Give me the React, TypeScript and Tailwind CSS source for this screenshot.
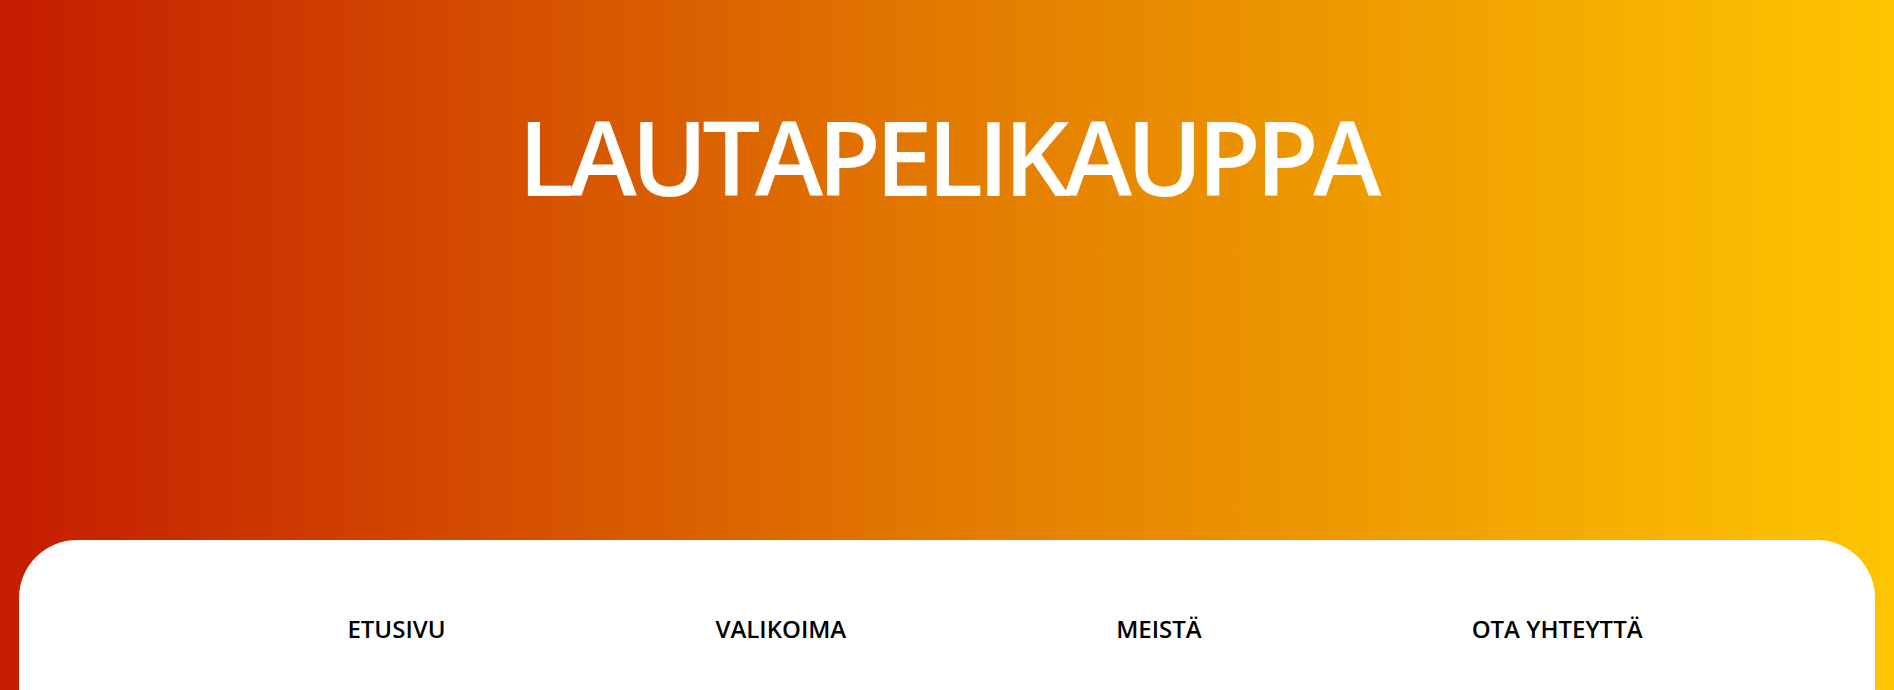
export default function App() {
  const items = ["ETUSIVU", "VALIKOIMA", "MEISTÄ", "OTA YHTEYTTÄ"];
  return (
    <div
      className="h-[690px] w-full overflow-hidden bg-[linear-gradient(to_right,#c41c00_0%,#e37a00_50%,#fec500_100%)]"
      style={{ fontFamily: '"Open Sans", "Liberation Sans", sans-serif' }}
    >
      <h1 className="pt-[105px] text-center text-[103px] font-semibold leading-none tracking-[-5.5px] text-white">
        LAUTAPELIKAUPPA
      </h1>
      <div className="mx-[19px] mt-[332px] h-[400px] rounded-t-[58px] bg-white pt-[73px]">
        <nav>
          <ul className="flex justify-center gap-[270px] pl-[96px]">
            {items.map((t) => (
              <li key={t} className="text-[24px] font-semibold leading-[32px] text-black">
                {t}
              </li>
            ))}
          </ul>
        </nav>
      </div>
    </div>
  );
}
